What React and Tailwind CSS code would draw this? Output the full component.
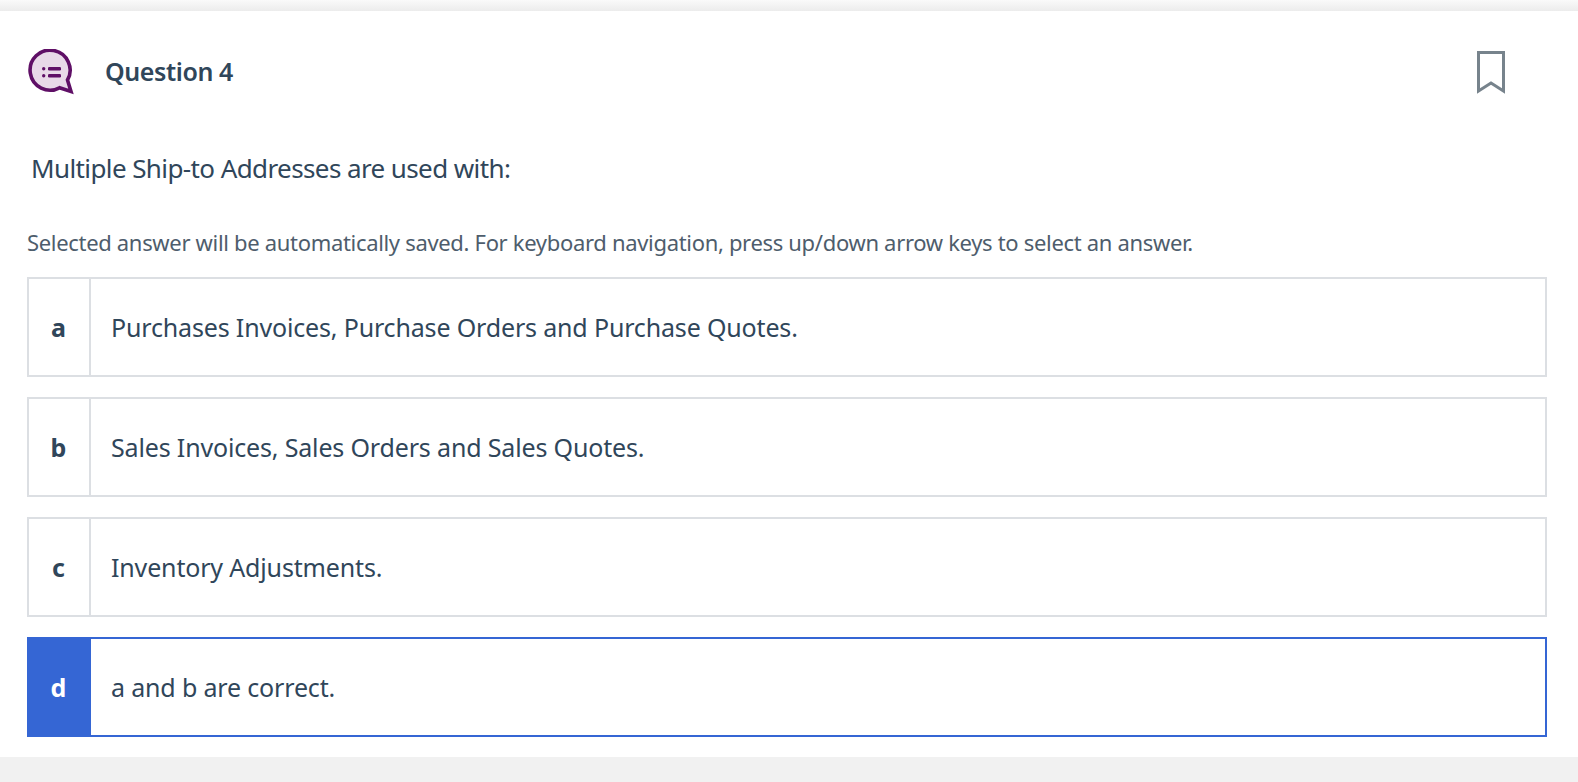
import React from 'react';

const answers = [
    { key: 'a', text: 'Purchases Invoices, Purchase Orders and Purchase Quotes.' },
    { key: 'b', text: 'Sales Invoices, Sales Orders and Sales Quotes.' },
    { key: 'c', text: 'Inventory Adjustments.' },
    { key: 'd', text: 'a and b are correct.', selected: true },
];

function QuestionIcon() {
    return (
        <svg width="46" height="46" viewBox="0 0 46 46" className="block">
            <path
                d="M31.5 38.8L43 42.5L39.5 31A20 20 0 1 0 31.5 38.8Z"
                fill="#e8d9e8"
                stroke="#5f0f66"
                strokeWidth="3.6"
                strokeLinejoin="miter"
            />
            <rect x="14" y="18" width="3.4" height="3.4" rx="1.7" fill="#5f0f66" />
            <rect x="14" y="25" width="3.4" height="3.4" rx="1.7" fill="#5f0f66" />
            <rect x="20" y="18" width="13" height="3.4" rx="1.2" fill="#5f0f66" />
            <rect x="20" y="25" width="13" height="3.4" rx="1.2" fill="#5f0f66" />
        </svg>
    );
}

function AnswerRow({ answer }) {
    if (answer.selected) {
        return (
            <div className="flex h-[100px] border-2 border-[#3566d4] bg-white">
                <div className="flex w-[62px] shrink-0 items-center justify-center bg-[#3566d4] pr-[3px] pt-[1px] text-[25px] font-bold text-white">
                    {answer.key}
                </div>
                <div className="flex items-center pl-[20px] pt-[1px] text-[25px] tracking-[-0.16px] text-[#30465a]">{answer.text}</div>
            </div>
        );
    }
    return (
        <div className="flex h-[100px] border-2 border-[#dcdfe3] bg-white">
            <div className="flex w-[62px] shrink-0 items-center justify-center border-r-2 border-[#dcdfe3] pr-[1px] pt-[1px] text-[25px] font-bold text-[#30465a]">
                {answer.key}
            </div>
            <div className="flex items-center pl-[20px] pt-[1px] text-[25px] tracking-[-0.16px] text-[#30465a]">{answer.text}</div>
        </div>
    );
}

export default function App() {
    return (
        <div className="flex h-[782px] flex-col bg-[#f1f1f1] font-['Noto_Sans','Open_Sans',sans-serif]">
            <div className="h-[11px] bg-gradient-to-b from-[#fafafa] to-[#ececec]" />
            <div className="h-[746px] bg-white pl-[27px] pr-[31px]">
                <header className="flex h-[121px] items-center justify-between pt-[1px]">
                    <div className="flex items-center">
                        <div className="ml-[1px] w-[77px]">
                            <QuestionIcon />
                        </div>
                        <h1 className="text-[25px] font-semibold tracking-[-0.4px] text-[#30465a]">Question 4</h1>
                    </div>
                    <svg width="28" height="43" viewBox="0 0 28 43" className="mr-[42px]">
                        <path d="M1.5 1.5H26.5V40L14 32L1.5 40Z" fill="none" stroke="#77838c" strokeWidth="3" />
                    </svg>
                </header>
                <p className="ml-[4px] mt-[18px] text-[26px] leading-[36px] tracking-[-0.6px] text-[#30465a]">Multiple Ship-to Addresses are used with:</p>
                <p className="mt-[41px] text-[22px] leading-[30px] tracking-[-0.32px] text-[#4e5d6c]">
                    Selected answer will be automatically saved. For keyboard navigation, press up/down arrow keys to select an answer.
                </p>
                <div className="mt-[20px] flex flex-col gap-[20px]">
                    {answers.map(answer => (
                        <AnswerRow key={answer.key} answer={answer} />
                    ))}
                </div>
            </div>
        </div>
    );
}
